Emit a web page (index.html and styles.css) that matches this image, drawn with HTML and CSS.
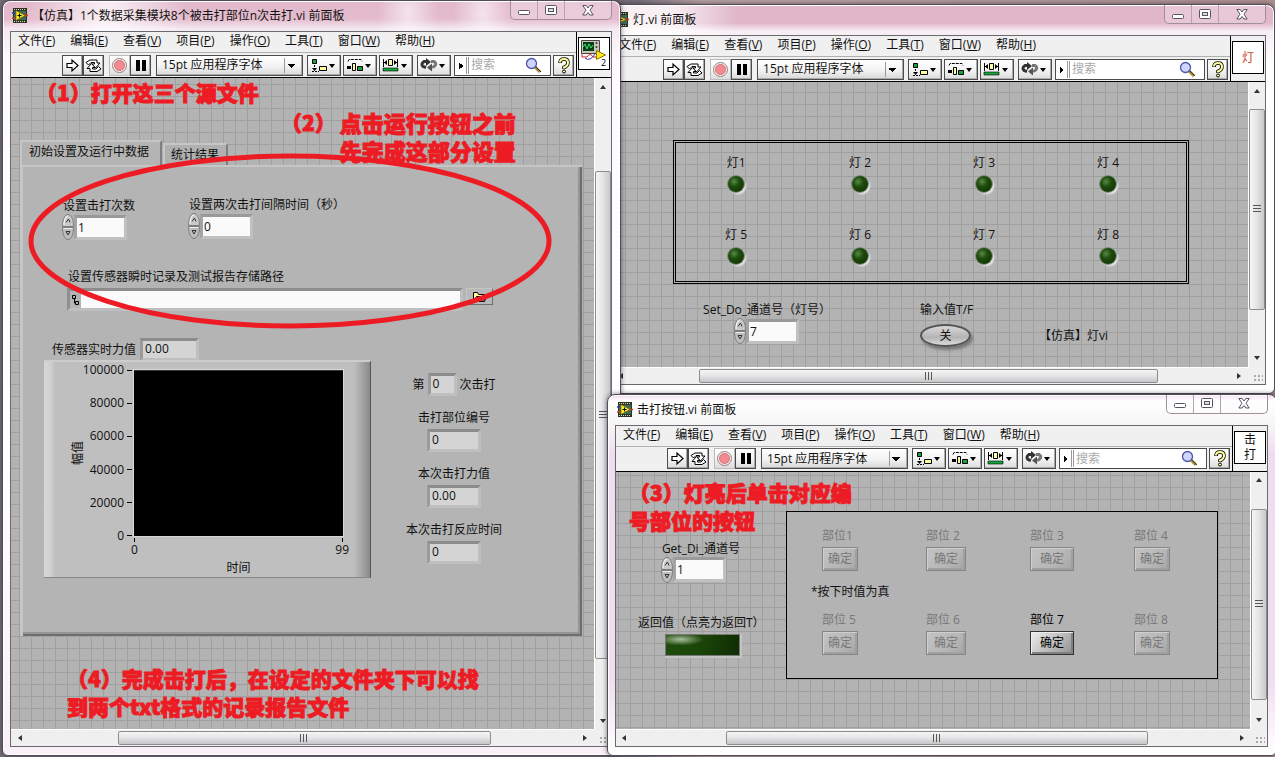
FILE: index.html
```html
<!DOCTYPE html>
<html lang="zh-CN">
<head>
<meta charset="utf-8">
<title>前面板</title>
<link rel="stylesheet" href="styles.css">
</head>
<body>
<svg class="sprite" aria-hidden="true">
  <symbol id="app" viewBox="0 0 16 15"><path fill="#2c3423" d="M1 0h14v15H1z"/><path stroke="#d8d8b8" stroke-dasharray="1 1" d="M2 1.500h12M2 13.500h12"/><path fill="#3f6b55" d="M2 3h12v9H2z"/><path fill="#ffe81c" stroke="#6b5a00" stroke-width=".6" d="M4 2.500l9 5-9 5z"/><path stroke="#000" d="M5.500 7.500h4M7.500 5.500v4"/><path stroke="#2439c8" stroke-width="1.500" d="M0 5h3"/><path stroke="#e03020" stroke-width="1.500" d="M0 10h3M13 7.500h3"/></symbol>
  <symbol id="min" viewBox="0 0 12 11"><rect x=".5" y="5.500" width="11" height="4" rx="1" fill="#fff" stroke="#57555f"/></symbol>
  <symbol id="max" viewBox="0 0 12 11"><rect x=".5" y=".5" width="11" height="9" rx="1" fill="#fff" stroke="#57555f"/><rect x="3.500" y="3.500" width="5" height="3" fill="#ddd" stroke="#57555f"/></symbol>
  <symbol id="close" viewBox="0 0 12 11"><path fill="#fff" stroke="#57555f" d="M.8.500h3.400L6 3 7.800.500h3.400L8 5.200l3.200 4.800H7.800L6 7.500 4.200 10H.8L4 5.200z"/></symbol>
  <symbol id="run" viewBox="0 0 19 19"><path fill="#fff" stroke="#000" stroke-width="1.200" d="M4 7.500h5V4l6 5.500L9 15v-3.500H4z"/></symbol>
  <symbol id="loop" viewBox="0 0 19 19"><path fill="#fff" stroke="#000" d="M6 4h7v3h3l-4.500 5L8 8h2.500V6.500H7L4.500 9 2 6.500z"/><path fill="#fff" stroke="#000" d="M13 15.500H6v-3H3l4.500-5L11 11.500H8.500V13H12l2.500-2.500L17 13z"/></symbol>
  <symbol id="abort" viewBox="0 0 19 19"><circle cx="9.500" cy="9.500" r="7" fill="#f5eeee" stroke="#9a8080"/><circle cx="9.500" cy="9.500" r="5" fill="#f28a8f" stroke="#cf7479"/></symbol>
  <symbol id="pause" viewBox="0 0 19 19"><path d="M5 4h4v11H5zM11 4h4v11h-4z"/></symbol>
  <symbol id="align" viewBox="0 0 31 19"><path fill="#15a33a" stroke="#000" d="M4.500 3.500h4v4h-4z"/><path fill="none" stroke="#000" stroke-dasharray="2 1" d="M4 15.500h7M6.500 9v5"/><path d="M4 12h5l-2.500 3z"/><path fill="#ffffa0" stroke="#000" d="M11.500 10.500h7v4h-7z"/><path d="M21 8h6l-3 4z"/></symbol>
  <symbol id="dist" viewBox="0 0 31 19"><path fill="none" stroke="#000" stroke-dasharray="3 1" d="M4 5.500L5 3.500h12l1 2"/><path fill="#000" d="M3 10h4v3H3z"/><path fill="#ffffa0" stroke="#000" d="M8.500 7.500h3v7h-3z"/><path fill="#15a33a" stroke="#000" d="M13.500 10.500h5v4h-5z"/><path d="M21 8h6l-3 4z"/></symbol>
  <symbol id="size" viewBox="0 0 31 19"><path stroke="#000" d="M3.500 3v8M17.500 3v8M4 6.500h3M14 6.500h3"/><path d="M4 6.500l3-2.500v5zM17 6.500l-3-2.500v5z"/><path fill="#ffffa0" stroke="#000" d="M8.500 3.500h4v6h-4z"/><path fill="#15a33a" stroke="#000" stroke-width=".6" d="M3 12h15v3H3z"/><path d="M21 8h6l-3 4z"/></symbol>
  <symbol id="order" viewBox="0 0 31 19"><path fill="none" stroke="#333" stroke-width="3" d="M8 5.500H6Q2.500 8 5 10.500l3 1"/><path fill="#333" d="M8 2l5 4-5 4z"/><path fill="none" stroke="#777" stroke-width="3" d="M13 5.500h3q3.500 2.500 0 5l-2 1"/><path fill="#555" d="M14 7.500l-5 4 5 4z"/><path d="M21 8h6l-3 4z"/></symbol>
  <symbol id="lens" viewBox="0 0 17 17"><path stroke="#a98a30" stroke-width="3" d="M10 10l5 5"/><path stroke="#333" d="M11 10l5 5"/><circle cx="6.500" cy="6.500" r="5" fill="#cfd5ff" stroke="#4a55a8" stroke-width="1.300"/></symbol>
  <symbol id="help" viewBox="0 0 19 19"><path fill="none" stroke="#000" stroke-width="3.500" d="M6 7q0-4 4-4t4 3.500-4 5v1.500"/><path fill="none" stroke="#ffff9c" stroke-width="2" d="M6 6.500q0-3.500 4-3.500t4 3.500-4 5v1"/><circle cx="10" cy="15.500" r="1.500" fill="#ffff9c" stroke="#000"/></symbol>
  <symbol id="up" viewBox="0 0 12 13"><path fill="#c9c9c9" stroke="#7d7d7d" d="M.5 12.500C.500 5 3 .500 6 .500s5.500 4.500 5.500 12z"/><path fill="none" stroke="#fff" d="M2 11C2 6 3.500 2.500 6 2"/><path fill="none" stroke="#333" d="M4 8.500L6.500 5 8 8.500"/></symbol>
  <symbol id="down" viewBox="0 0 12 13"><path fill="#bdbdbd" stroke="#7d7d7d" d="M.5.500C.500 8 3 12.500 6 12.500S11.500 8 11.500.500z"/><path fill="none" stroke="#eee" d="M1.500 1.500h9"/><path fill="none" stroke="#333" d="M8 4.500H4L6 8z"/></symbol>
</svg>

<main class="desktop">

<section class="window window-lamp">
  <header class="titlebar">
    <svg class="app-icon"><use href="#app"/></svg><h1>灯.vi 前面板</h1>
    <div class="win-buttons"><button aria-label="最小化"><svg><use href="#min"/></svg></button><button aria-label="最大化"><svg><use href="#max"/></svg></button><button aria-label="关闭"><svg><use href="#close"/></svg></button></div>
  </header>
  <div class="client">
    <div class="bars">
      <nav class="menu"><button>文件(<u>F</u>)</button><button>编辑(<u>E</u>)</button><button>查看(<u>V</u>)</button><button>项目(<u>P</u>)</button><button>操作(<u>O</u>)</button><button>工具(<u>T</u>)</button><button>窗口(<u>W</u>)</button><button>帮助(<u>H</u>)</button></nav>
      <div class="toolbar">
        <div class="pair"><button class="tool" aria-label="运行"><svg><use href="#run"/></svg></button><button class="tool" aria-label="连续运行"><svg><use href="#loop"/></svg></button></div>
        <div class="pair"><button class="tool tool-off" aria-label="中止"><svg><use href="#abort"/></svg></button><button class="tool" aria-label="暂停"><svg><use href="#pause"/></svg></button></div>
        <select class="font-select" aria-label="字体"><option>15pt 应用程序字体</option></select>
        <div class="arrange"><button class="tool wide" aria-label="对齐"><svg><use href="#align"/></svg></button><button class="tool wide" aria-label="分布"><svg><use href="#dist"/></svg></button><button class="tool wide" aria-label="调整大小"><svg><use href="#size"/></svg></button></div>
        <button class="tool wide" aria-label="重新排序"><svg><use href="#order"/></svg></button>
        <label class="search"><i></i><input type="search" placeholder="搜索" aria-label="搜索"><svg><use href="#lens"/></svg></label>
        <button class="tool help" aria-label="帮助"><svg><use href="#help"/></svg></button>
      </div>
      <div class="vi-pane"><div class="vi-icon vi-lamp">灯</div></div>
    </div>
    <div class="view">
      <div class="canvas">
        <div class="lamp-frame">
          <div class="lamp"><span>灯1</span><i class="led"></i></div><div class="lamp"><span>灯 2</span><i class="led"></i></div><div class="lamp"><span>灯 3</span><i class="led"></i></div><div class="lamp"><span>灯 4</span><i class="led"></i></div>
          <div class="lamp"><span>灯 5</span><i class="led"></i></div><div class="lamp"><span>灯 6</span><i class="led"></i></div><div class="lamp"><span>灯 7</span><i class="led"></i></div><div class="lamp"><span>灯 8</span><i class="led"></i></div>
        </div>
        <div class="control set-do"><label for="set-do">Set_Do_通道号（灯号）</label>
          <div class="number"><span class="knob"><button aria-label="增加"><svg><use href="#up"/></svg></button><button aria-label="减少"><svg><use href="#down"/></svg></button></span><input id="set-do" value="7"></div></div>
        <div class="control input-value"><label for="tf">输入值T/F</label><button id="tf" class="oval-button">关</button></div>
        <p class="note">【仿真】灯vi</p>
      </div>
      <div class="scroll-v"><b class="arrow-up"></b><div class="thumb"></div><b class="arrow-down"></b></div>
      <div class="scroll-h"><b class="arrow-left"></b><div class="thumb"></div><b class="arrow-right"></b></div>
      <div class="grip"></div>
    </div>
  </div>
</section>

<section class="window window-main">
  <header class="titlebar">
    <svg class="app-icon"><use href="#app"/></svg><h1>【仿真】1个数据采集模块8个被击打部位n次击打.vi 前面板</h1>
    <div class="win-buttons"><button aria-label="最小化"><svg><use href="#min"/></svg></button><button aria-label="最大化"><svg><use href="#max"/></svg></button><button aria-label="关闭"><svg><use href="#close"/></svg></button></div>
  </header>
  <div class="client">
    <div class="bars">
      <nav class="menu"><button>文件(<u>F</u>)</button><button>编辑(<u>E</u>)</button><button>查看(<u>V</u>)</button><button>项目(<u>P</u>)</button><button>操作(<u>O</u>)</button><button>工具(<u>T</u>)</button><button>窗口(<u>W</u>)</button><button>帮助(<u>H</u>)</button></nav>
      <div class="toolbar">
        <div class="pair"><button class="tool" aria-label="运行"><svg><use href="#run"/></svg></button><button class="tool" aria-label="连续运行"><svg><use href="#loop"/></svg></button></div>
        <div class="pair"><button class="tool tool-off" aria-label="中止"><svg><use href="#abort"/></svg></button><button class="tool" aria-label="暂停"><svg><use href="#pause"/></svg></button></div>
        <select class="font-select" aria-label="字体"><option>15pt 应用程序字体</option></select>
        <div class="arrange"><button class="tool wide" aria-label="对齐"><svg><use href="#align"/></svg></button><button class="tool wide" aria-label="分布"><svg><use href="#dist"/></svg></button><button class="tool wide" aria-label="调整大小"><svg><use href="#size"/></svg></button></div>
        <button class="tool wide" aria-label="重新排序"><svg><use href="#order"/></svg></button>
        <label class="search"><i></i><input type="search" placeholder="搜索" aria-label="搜索"><svg><use href="#lens"/></svg></label>
        <button class="tool help" aria-label="帮助"><svg><use href="#help"/></svg></button>
      </div>
      <div class="vi-pane"><div class="vi-icon">
        <svg viewBox="0 0 30 30"><path fill="#c9c6b4" stroke="#444" d="M2.500 2.500h18v13h-18z"/><path fill="#063f1a" d="M4 4h11v9H4z"/><path fill="none" stroke="#3fe06a" d="M4 9l2-3 2 5 2-5 2 4 2-3"/><circle cx="17.500" cy="5" r="1" fill="#333"/><circle cx="17.500" cy="9" r="1" fill="#333"/><path fill="none" stroke="#d02020" d="M3 15v4h5q3-5 6 0h4"/><path fill="none" stroke="#4038b0" d="M6 20q5 4 10-4"/><path fill="#ffe81c" stroke="#8a7400" d="M17.500 12.500l9 4.500-9 4.500z"/><text x="22" y="28" class="vi-number">2</text></svg>
      </div></div>
    </div>
    <div class="view">
      <div class="canvas">
        <div class="tab-control">
          <div class="tabs"><button class="tab tab-active">初始设置及运行中数据</button><button class="tab">统计结果</button></div>
          <div class="tab-page">
            <div class="control hit-count"><label for="hits">设置击打次数</label>
              <div class="number"><span class="knob"><button aria-label="增加"><svg><use href="#up"/></svg></button><button aria-label="减少"><svg><use href="#down"/></svg></button></span><input id="hits" value="1"></div></div>
            <div class="control interval"><label for="interval">设置两次击打间隔时间（秒）</label>
              <div class="number"><span class="knob"><button aria-label="增加"><svg><use href="#up"/></svg></button><button aria-label="减少"><svg><use href="#down"/></svg></button></span><input id="interval" value="0"></div></div>
            <div class="control save-path"><label for="path">设置传感器瞬时记录及测试报告存储路径</label>
              <div class="path-row"><div class="path-field"><svg viewBox="0 0 8 12"><path fill="none" stroke="#000" d="M1.500 1.500h3v3h-3zM4.500 7.500h3v3h-3zM3.500 5v4H4"/></svg><input id="path"></div>
              <button class="browse" aria-label="浏览"><svg viewBox="0 0 16 12"><path fill="#ffff9c" stroke="#000" d="M1.500 10.500v-9h4l1 2h6v2"/><path fill="#777" stroke="#000" d="M1.500 10.500l3-5h10l-2 5z"/></svg></button></div></div>
            <div class="live-force"><label for="live">传感器实时力值</label><output id="live" class="field w-live">0.00</output></div>

            <div class="chart">
              <div class="axis-title-y"><span>幅值</span></div>
              <div class="scale-y"><span>100000</span><span>80000</span><span>60000</span><span>40000</span><span>20000</span><span>0</span></div>
              <div class="plot"></div>
              <div class="scale-x"><span>0</span><span>99</span></div>
              <div class="axis-title-x">时间</div>
            </div>

            <div class="stats">
              <div class="stat-row"><label for="nth">第</label><output id="nth" class="field w-nth">0</output><span>次击打</span></div>
              <div class="stat"><label for="part">击打部位编号</label><output id="part" class="field">0</output></div>
              <div class="stat"><label for="force">本次击打力值</label><output id="force" class="field">0.00</output></div>
              <div class="stat"><label for="react">本次击打反应时间</label><output id="react" class="field">0</output></div>
            </div>
          </div>
        </div>
        <svg class="ring" viewBox="0 0 524 178"><ellipse cx="262" cy="89" rx="259" ry="85"/></svg>
        <p class="callout callout-open">（1）打开这三个源文件</p>
        <div class="callout callout-setup"><span>（2）</span><p>点击运行按钮之前<br>先完成这部分设置</p></div>
        <p class="callout callout-report">（4）完成击打后，在设定的文件夹下可以找<br>到两个txt格式的记录报告文件</p>
      </div>
      <div class="scroll-v"><b class="arrow-up"></b><div class="thumb"></div><b class="arrow-down"></b></div>
      <div class="scroll-h"><b class="arrow-left"></b><div class="thumb"></div><b class="arrow-right"></b></div>
      <div class="grip"></div>
    </div>
  </div>
</section>

<section class="window window-hit">
  <header class="titlebar">
    <svg class="app-icon"><use href="#app"/></svg><h1>击打按钮.vi 前面板</h1>
    <div class="win-buttons"><button aria-label="最小化"><svg><use href="#min"/></svg></button><button aria-label="最大化"><svg><use href="#max"/></svg></button><button aria-label="关闭"><svg><use href="#close"/></svg></button></div>
  </header>
  <div class="client">
    <div class="bars">
      <nav class="menu"><button>文件(<u>F</u>)</button><button>编辑(<u>E</u>)</button><button>查看(<u>V</u>)</button><button>项目(<u>P</u>)</button><button>操作(<u>O</u>)</button><button>工具(<u>T</u>)</button><button>窗口(<u>W</u>)</button><button>帮助(<u>H</u>)</button></nav>
      <div class="toolbar">
        <div class="pair"><button class="tool" aria-label="运行"><svg><use href="#run"/></svg></button><button class="tool" aria-label="连续运行"><svg><use href="#loop"/></svg></button></div>
        <div class="pair"><button class="tool tool-off" aria-label="中止"><svg><use href="#abort"/></svg></button><button class="tool" aria-label="暂停"><svg><use href="#pause"/></svg></button></div>
        <select class="font-select" aria-label="字体"><option>15pt 应用程序字体</option></select>
        <div class="arrange"><button class="tool wide" aria-label="对齐"><svg><use href="#align"/></svg></button><button class="tool wide" aria-label="分布"><svg><use href="#dist"/></svg></button><button class="tool wide" aria-label="调整大小"><svg><use href="#size"/></svg></button></div>
        <button class="tool wide" aria-label="重新排序"><svg><use href="#order"/></svg></button>
        <label class="search"><i></i><input type="search" placeholder="搜索" aria-label="搜索"><svg><use href="#lens"/></svg></label>
        <button class="tool help" aria-label="帮助"><svg><use href="#help"/></svg></button>
      </div>
      <div class="vi-pane"><div class="vi-icon vi-hit">击<br>打</div></div>
    </div>
    <div class="view">
      <div class="canvas">
        <div class="control get-di"><label for="get-di">Get_Di_通道号</label>
          <div class="number"><span class="knob"><button aria-label="增加"><svg><use href="#up"/></svg></button><button aria-label="减少"><svg><use href="#down"/></svg></button></span><input id="get-di" value="1"></div></div>
        <div class="control return-value"><span>返回值（点亮为返回T）</span><i class="bar-led"></i></div>
        <div class="hit-frame">
          <div class="hit-row">
            <div class="hit"><label for="h1">部位1</label><button id="h1" disabled>确定</button></div>
            <div class="hit"><label for="h2">部位 2</label><button id="h2" class="mid" disabled>确定</button></div>
            <div class="hit"><label for="h3">部位 3</label><button id="h3" class="big" disabled>确定</button></div>
            <div class="hit"><label for="h4">部位 4</label><button id="h4" disabled>确定</button></div>
          </div>
          <p class="hint">*按下时值为真</p>
          <div class="hit-row">
            <div class="hit"><label for="h5">部位 5</label><button id="h5" disabled>确定</button></div>
            <div class="hit"><label for="h6">部位 6</label><button id="h6" class="mid" disabled>确定</button></div>
            <div class="hit hit-live"><label for="h7">部位 7</label><button id="h7" class="big">确定</button></div>
            <div class="hit"><label for="h8">部位 8</label><button id="h8" disabled>确定</button></div>
          </div>
        </div>
        <p class="callout callout-press">（3）灯亮后单击对应编<br>号部位的按钮</p>
      </div>
      <div class="scroll-v"><b class="arrow-up"></b><div class="thumb"></div><b class="arrow-down"></b></div>
      <div class="scroll-h"><b class="arrow-left"></b><div class="thumb"></div><b class="arrow-right"></b></div>
      <div class="grip"></div>
    </div>
  </div>
</section>
</main>
</body>
</html>
```

FILE: styles.css
```css
* { box-sizing: border-box; }

body {
  margin: 0;
  overflow: hidden;
  font: 12px/16px "Open Sans", "Noto Sans CJK SC", sans-serif;
  color: #111;
}

button, input, select {
  font: inherit;
  color: inherit;
  margin: 0;
  padding: 0;
  border: 0;
  border-radius: 0;
  background: none;
}

p, h1 { margin: 0; }
i { font-style: normal; }
svg { display: block; }
.sprite { position: absolute; width: 0; height: 0; }

.desktop {
  position: relative;
  height: 100vh;
  background: linear-gradient(90deg, #77717a, #77717a 50%, #b8a3a3 55%, #ad9192);
}

/* windows */
.window {
  position: absolute;
  display: flex;
  flex-direction: column;
  padding: 0 8px 8px 7px;
  border: 1px solid #514c57;
  border-radius: 8px 8px 6px 6px;
  box-shadow: inset 0 0 0 1px #fff, 0 0 5px rgba(30, 20, 35, .6);
}

.window-main {
  top: 0; bottom: 1px; left: 2px; right: 51.3%;
  background:
    radial-gradient(ellipse at 104px 12px, rgba(255, 255, 255, .8), transparent 80px),
    radial-gradient(ellipse at 405px 12px, rgba(255, 255, 255, .6), transparent 30px),
    radial-gradient(ellipse at 480px 12px, rgba(255, 255, 255, .6), transparent 30px),
    linear-gradient(#e2b8cb 0, #e4bccd 18px, #f4e9f1 28px, #fdfbfd 60px, #fff 60%, #f9f0f8);
}
.window-lamp {
  top: 4px; bottom: 48%; left: 47.3%; right: 0;
  background:
    linear-gradient(90deg, rgba(255, 255, 255, .8) 10%, transparent 20%),
    linear-gradient(#e0b6c9 0, #e0b6c9 18px, #f7edf3 26px, #fff 60px);
}
.window-hit {
  top: 52%; bottom: 1px; left: 47.6%; right: -2px;
  background: linear-gradient(#f3d9ee 0, #fff 6px, #f6f5f6 30px, #f0dcf0 60px, #f0dff0 80%, #fff);
}

.titlebar {
  flex: none;
  display: flex;
  height: 30px;
  padding-left: 2px;
}
.app-icon { width: 16px; height: 15px; margin-top: 7px; }
.titlebar h1 {
  flex: 1;
  padding: 7px 0 0 4px;
  font-size: 12px;
  font-weight: 400;
  white-space: nowrap;
}
.win-buttons {
  display: flex;
  height: 19px;
  border: 1px solid #a08e9a;
  border-top: 0;
  border-radius: 0 0 5px 5px;
  background: rgba(255, 255, 255, .25);
}
.win-buttons button { display: grid; place-items: center; width: 27px; border-right: 1px solid #b5a4b0; }
.win-buttons button:last-child { width: 46px; border: 0; }
.win-buttons svg { width: 12px; height: 11px; }

.client {
  flex: 1;
  display: flex;
  flex-direction: column;
  min-height: 0;
  border: 1px solid #6c6870;
  background: #f0f0f0;
}

/* menu and tool bars */
.bars {
  display: grid;
  grid-template-columns: 1fr 35px;
  border-bottom: 1px solid #000;
}
.menu {
  display: flex;
  align-items: flex-start;
  gap: 15px;
  height: 21px;
  padding: 1px 0 0 7px;
  border-bottom: 1px solid #b0b0b0;
  white-space: nowrap;
  overflow: hidden;
}
.toolbar {
  display: flex;
  align-items: center;
  height: 24px;
  padding: 0 2px 0 51px;
}
.pair { display: flex; margin-right: 5px; }
.tool {
  flex: none;
  width: 21px;
  height: 21px;
  border: 1px solid #4c4c4c;
  background: linear-gradient(#fff, #f4f4f4 50%, #dcdcdc);
  box-shadow: inset -1px -1px #aaa;
}
.tool-off { border-color: #bbb; box-shadow: none; }
.tool svg { width: 19px; height: 19px; }
.wide { width: 34px; }
.wide svg { width: 31px; }
.arrange { display: flex; gap: 2px; margin: 0 4px; }
.font-select {
  appearance: none;
  flex: none;
  width: 147px;
  height: 21px;
  padding: 0 5px;
  border: 1px solid #4c4c4c;
  background:
    conic-gradient(from -45deg at 50% 100%, #000 90deg, transparent 0) right 7px top 8px / 8px 4px no-repeat,
    linear-gradient(#999, #999) right 17px top 2px / 1px 15px no-repeat,
    linear-gradient(#fff, #f2f2f2 55%, #d8d8d8);
  box-shadow: inset -1px -1px #aaa;
}
.search {
  flex: 1;
  display: flex;
  align-items: center;
  min-width: 0;
  height: 21px;
  margin: 0 2px 0 3px;
  border: 1px solid #4c4c4c;
  background: #fff;
}
.search i {
  width: 14px;
  height: 17px;
  border-right: 3px double #999;
  background: conic-gradient(from 225deg at 100% 50%, #000 90deg, transparent 0) 4px 6px / 4px 6px no-repeat;
}
.search input { flex: 1; width: 0; min-width: 0; padding-left: 2px; outline: 0; }
.search input::placeholder { color: #aaa; opacity: 1; }
.search svg { width: 17px; height: 17px; margin-right: 8px; }
.vi-pane {
  grid-area: 1 / 2 / 3 / 3;
  padding: 5px 1px 0;
  border-left: 1px solid #000;
}
.vi-icon {
  height: 33px;
  border: 1px solid #000;
  background: #fff;
  text-align: center;
}
.vi-icon svg { width: 30px; height: 30px; }
.vi-number { font-size: 9px; }
.vi-lamp { color: #c8441f; line-height: 31px; }
.vi-hit { line-height: 15px; }

/* canvas and scroll bars */
.view {
  flex: 1;
  display: grid;
  grid-template: minmax(0, 1fr) 17px / minmax(0, 1fr) 17px;
  min-height: 0;
}
.canvas {
  position: relative;
  overflow: hidden;
  background:
    linear-gradient(90deg, #9f9f9f 1px, transparent 1px) var(--grid-x) 0 / 12px 12px,
    linear-gradient(#9f9f9f 1px, transparent 1px) 0 var(--grid-y) / 12px 12px,
    #b3b3b3;
}
.window-main { --grid-x: 8px; --grid-y: 6px; --h: 90fr 373fr 86fr; --v: 76fr 487fr 53fr; }
.window-lamp { --grid-x: 1px; --grid-y: 10px; --h: 70fr 458fr 73fr; --v: 10fr 202fr 40fr; }
.window-hit { --grid-x: 2px; --grid-y: 3px; --h: 93fr 423fr 85fr; --v: 20fr 191fr 12fr; }

.scroll-v, .scroll-h { display: grid; background: #efefef; }
.scroll-v { grid-template-rows: 17px var(--v) 17px; border-left: 1px solid #fff; }
.scroll-h { grid-template-columns: 17px var(--h) 17px; border-top: 1px solid #fff; }
.scroll-v .thumb { grid-row: 3; }
.scroll-h .thumb { grid-column: 3; }
.thumb {
  display: grid;
  place-items: center;
  border: 1px solid #8d8d8d;
  border-radius: 2px;
  background: linear-gradient(90deg, #f5f5f5, #e4e4e6 50%, #c9c9cc);
}
.scroll-h .thumb { margin: 1px 0; background: linear-gradient(#f5f5f5, #e4e4e6 50%, #c6c6c9); }
.thumb::after {
  content: "";
  width: 8px;
  height: 8px;
  background: repeating-linear-gradient(#555 0 1px, transparent 1px 3px);
}
.scroll-h .thumb::after { background: repeating-linear-gradient(90deg, #555 0 1px, transparent 1px 3px); }
.scroll-v b, .scroll-h b {
  place-self: center;
  border: 3px solid transparent;
}
.scroll-v .arrow-up { border-top: 0; border-bottom: 4px solid #333; }
.scroll-v .arrow-down { grid-row: 5; border-bottom: 0; border-top: 4px solid #333; }
.scroll-h .arrow-left { border-left: 0; border-right: 4px solid #333; }
.scroll-h .arrow-right { grid-column: 5; border-right: 0; border-left: 4px solid #333; }
.grip {
  background:
    conic-gradient(from 90deg at 2px 2px, transparent 270deg, #aaa 0) 6px 6px / 4px 4px,
    #f0f0f0;
  clip-path: none;
  border: solid #f0f0f0;
  border-width: 6px 2px 2px 6px;
}

/* numeric controls and indicators */
.control { position: absolute; white-space: nowrap; }
.control > label, .control > span { display: block; }
.number { display: flex; align-items: center; }
.knob { width: 12px; }
.knob button, .knob svg { display: block; width: 12px; height: 13px; }
.number input {
  width: 53px;
  height: 25px;
  padding-left: 1px;
  border: 3px solid;
  border-color: #9a9a9a #c0c0c0 #c0c0c0 #a4a4a4;
  background: #fafafa;
  outline: 0;
}
.field {
  display: block;
  width: 54px;
  height: 23px;
  padding-left: 2px;
  border: 3px solid;
  border-color: #8c8c8c #bfbfbf #bfbfbf #9a9a9a;
  background: #d4d4d4;
}
.w-live { width: 59px; }
.w-nth { width: 29px; }

/* tab control */
.tab-control { position: absolute; left: 9px; top: 62px; width: 562px; }
.tabs { display: flex; align-items: flex-end; gap: 1px; }
.tab {
  height: 22px;
  padding: 0 7px 1px 6px;
  border: 2px solid;
  border-color: #c6c6c6 #7f7f7f transparent #c6c6c6;
  border-bottom: 0;
  background: #b0b0b0;
}
.tab-active { height: 25px; padding: 0 11px 3px 7px; background: #b4b4b4; }
.tab-page {
  position: relative;
  height: 471px;
  background: #b4b4b4;
  box-shadow: inset 3px 2px #c6c6c6, inset -2px -2px #6e6e6e, inset -4px -4px #959595;
}
.hit-count { left: 42px; top: 33px; }
.interval { left: 168px; top: 32px; }
.save-path { left: 47px; top: 104px; }
.hit-count label, .interval label, .save-path label { padding-left: 1px; }
.path-row { display: flex; gap: 3px; margin-top: 3px; }
.path-field {
  display: flex;
  align-items: center;
  gap: 2px;
  width: 396px;
  height: 23px;
  padding-left: 1px;
  border: 3px solid;
  border-color: #8c8c8c #bfbfbf #bfbfbf #8f8f8f;
}
.path-field svg { width: 8px; height: 12px; }
.path-field input { flex: 1; height: 100%; background: #fafafa; outline: 0; }
.browse {
  display: grid;
  place-items: center;
  width: 27px;
  height: 17px;
  border: 1px solid;
  border-color: #c6c6c6 #6e6e6e #6e6e6e #c6c6c6;
  background: #b8b8b8;
}
.browse svg { width: 16px; height: 12px; }
.live-force {
  position: absolute;
  left: 32px;
  top: 173px;
  display: flex;
  align-items: center;
  gap: 4px;
}

.chart {
  position: absolute;
  left: 24px;
  top: 195px;
  display: grid;
  grid-template: 166px 24px 16px / 46px 34px 10px 209px;
  width: 327px;
  height: 218px;
  padding-top: 8px;
  border-top: 2px solid #cdcdcd;
  border-bottom: 1px solid #888;
  border-right: 1px solid #555;
  background: linear-gradient(90deg, #d6d6d6, #d0d0d0 7px, #bfbfbf 11px, #bfbfbf 310px, #8a8a8a);
}
.chart > * { min-width: 0; }
.axis-title-y { display: grid; place-items: center; padding-left: 22px; }
.axis-title-y span { writing-mode: vertical-rl; text-orientation: sideways; transform: rotate(180deg); }
.scale-y {
  grid-column: 2 / 4;
  display: flex;
  flex-direction: column;
  justify-content: space-between;
  margin: -8px 2px -8px 0;
  text-align: right;
}
.scale-y span { display: flex; justify-content: flex-end; align-items: center; gap: 3px; }
.scale-y span::after { content: ""; flex: none; width: 5px; height: 1px; background: #000; }
.plot { background: #000; outline: 1px solid #d8d8d8; border-top: 1px solid #333; }
.scale-x {
  grid-area: 2 / 4;
  display: flex;
  justify-content: space-between;
  margin: 2px -6px 0 -3px;
}
.scale-x span { display: grid; justify-items: center; align-content: start; }
.scale-x span::before { content: ""; width: 1px; height: 4px; background: #000; }
.axis-title-x { grid-area: 3 / 4; text-align: center; }

.stats {
  position: absolute;
  left: 386px;
  top: 208px;
  display: flex;
  flex-direction: column;
  align-items: center;
  gap: 14px;
}
.stat-row { display: flex; align-items: center; gap: 3px; }
.stat { display: flex; flex-direction: column; align-items: center; gap: 3px; }

/* red marker notes */
.callout {
  position: absolute;
  font: 900 21px/28px "Noto Sans CJK SC", sans-serif;
  color: #ed1c24;
  -webkit-text-stroke: 1px #ed1c24;
  white-space: nowrap;
}
.callout-open { left: 25px; top: 0; }
.callout-setup { left: 270px; top: 30px; display: flex; gap: 4px; }
.callout-setup p { font-size: 22px; }
.callout-report { left: 56px; top: 586px; }
.callout-press { left: 13px; top: 6px; }
.ring { position: absolute; left: 17px; top: 74px; width: 524px; height: 178px; }
.ring ellipse { fill: none; stroke: #ed1c24; stroke-width: 5; }

/* lamp window */
.lamp-frame {
  position: absolute;
  left: 61px;
  top: 58px;
  display: grid;
  grid-template-columns: repeat(4, 124px);
  align-content: start;
  row-gap: 32px;
  width: 516px;
  height: 144px;
  padding-top: 12px;
  border: 3px double #000;
}
.lamp {
  display: grid;
  justify-items: center;
  align-content: start;
  gap: 5px;
  height: 40px;
  padding-right: 4px;
}
.led {
  width: 16px;
  height: 16px;
  border-radius: 50%;
  background: radial-gradient(circle at 38% 35%, #58884a, #1f4d0c 35%, #0b2a02);
  box-shadow: 0 0 0 1px #7c8a76, 2px 2px 2px #eee;
}
.set-do { left: 91px; top: 220px; }
.set-do .number { padding-left: 31px; }
.input-value { left: 308px; top: 220px; }
.oval-button {
  display: block;
  width: 51px;
  height: 23px;
  margin-top: 6px;
  border: 2px solid #555;
  border-radius: 50%;
  background: linear-gradient(#d8d8d8, #b4b4b4 60%, #ddd);
  box-shadow: 2px 3px 3px #777;
}
.note { position: absolute; left: 427px; top: 246px; }

/* hit-button window */
.get-di { left: 45px; top: 69px; }
.get-di label { padding-left: 1px; }
.return-value { left: 22px; top: 143px; }
.bar-led {
  display: block;
  width: 75px;
  height: 22px;
  margin: 3px 0 0 27px;
  border: 1px solid #777;
  background: radial-gradient(ellipse at 20% 22%, #a8bd9b, transparent 28%), linear-gradient(100deg, #1f4d0c, #1a4408 50%, #0f2c03);
  box-shadow: 1px 1px 0 1px #c4c4c4;
}
.hit-frame {
  position: absolute;
  left: 170px;
  top: 39px;
  width: 432px;
  height: 168px;
  padding: 16px 0 0 35px;
  border: 1px solid #000;
  background: #b3b3b3;
}
.hit-row { display: grid; grid-template-columns: repeat(4, 104px); }
.hit { color: #777; }
.hit label { display: block; }
.hit button {
  display: block;
  width: 36px;
  height: 24px;
  margin-top: 3px;
  border: 1px solid #858585;
  background: linear-gradient(135deg, #c4c4c4, #b6b6b6 60%, #a4a4a4);
  box-shadow: inset 1px 1px #cfcfcf, inset -2px -2px #a0a0a0;
}
.hit .mid { width: 40px; }
.hit .big { width: 44px; }
.hit-live { color: #000; }
.hit-live button {
  border-color: #333;
  background: linear-gradient(135deg, #eee, #c0c0c0 50%, #909090);
  box-shadow: inset 1px 1px #eee, inset -2px -2px #808080;
}
.hint { margin: 13px 0 12px -11px; }
```
